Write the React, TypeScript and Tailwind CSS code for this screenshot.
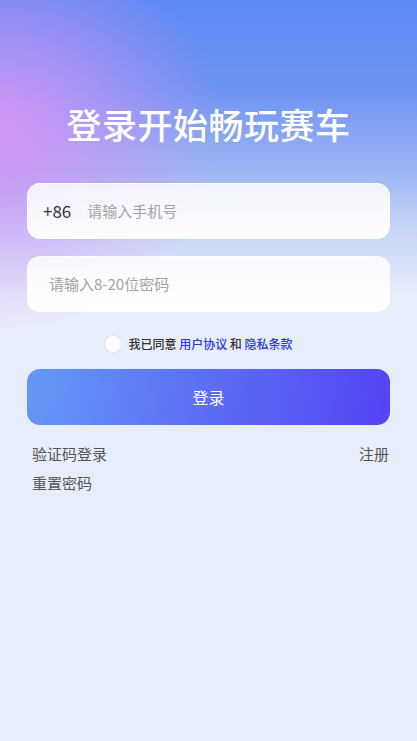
import React from "react";

const font = '"Noto Sans CJK SC", "Noto Sans", sans-serif';

export default function App() {
  return (
    <div
      className="min-h-[741px] w-full bg-[#e7edfa] bg-[radial-gradient(ellipse_220px_200px_at_0px_130px,rgba(212,148,246,0.98),rgba(212,148,246,0)),linear-gradient(180deg,#5b88f4_0px,#6e94f3_90px,#98b2f4_165px,#c5d3f7_225px,#e7edfa_295px)] bg-no-repeat"
      style={{ fontFamily: font }}
    >
      <div className="flex flex-col px-[27px] pt-[100px]">
        <h1 className="text-center text-[35px] font-medium leading-[48px] tracking-[0.5px] text-white">
          登录开始畅玩赛车
        </h1>

        <div className="mt-[35px] flex h-[56px] items-center rounded-[13px] border border-white/70 bg-[linear-gradient(180deg,rgba(255,255,255,0.82),rgba(255,255,255,0.97))] pl-[15px]">
          <span className="text-[17px] text-[#333]">+86</span>
          <span className="ml-[16px] text-[15px] text-[#a3a3a3]">请输入手机号</span>
        </div>

        <div className="mt-[17px] flex h-[56px] items-center rounded-[13px] border border-white/70 bg-[linear-gradient(180deg,rgba(255,255,255,0.85),rgba(255,255,255,0.97))] pl-[21px]">
          <span className="text-[15px] text-[#a3a3a3]">请输入8-20位密码</span>
        </div>

        <div className="mt-[23px] flex items-center justify-center gap-[6px] pr-[20px]">
          <span className="h-[18px] w-[18px] rounded-full border border-[#e4e4e4] bg-white" />
          <span className="text-[12px] font-medium text-[#333]">
            我已同意 <span className="text-[#2d35e6]">用户协议</span> 和{" "}
            <span className="text-[#2d35e6]">隐私条款</span>
          </span>
        </div>

        <button className="mt-[16px] flex h-[56px] items-center justify-center rounded-[13px] bg-[linear-gradient(100deg,#6498f6,#5443f3)] text-[16px] text-white">
          登录
        </button>

        <div className="mt-[17px] flex items-center justify-between px-[5px] pr-[1px]">
          <span className="text-[15px] leading-[24px] text-[#555]">验证码登录</span>
          <span className="text-[15px] leading-[24px] text-[#555]">注册</span>
        </div>
        <div className="mt-[4px] px-[5px]">
          <span className="text-[15px] leading-[24px] text-[#555]">重置密码</span>
        </div>
      </div>
    </div>
  );
}
